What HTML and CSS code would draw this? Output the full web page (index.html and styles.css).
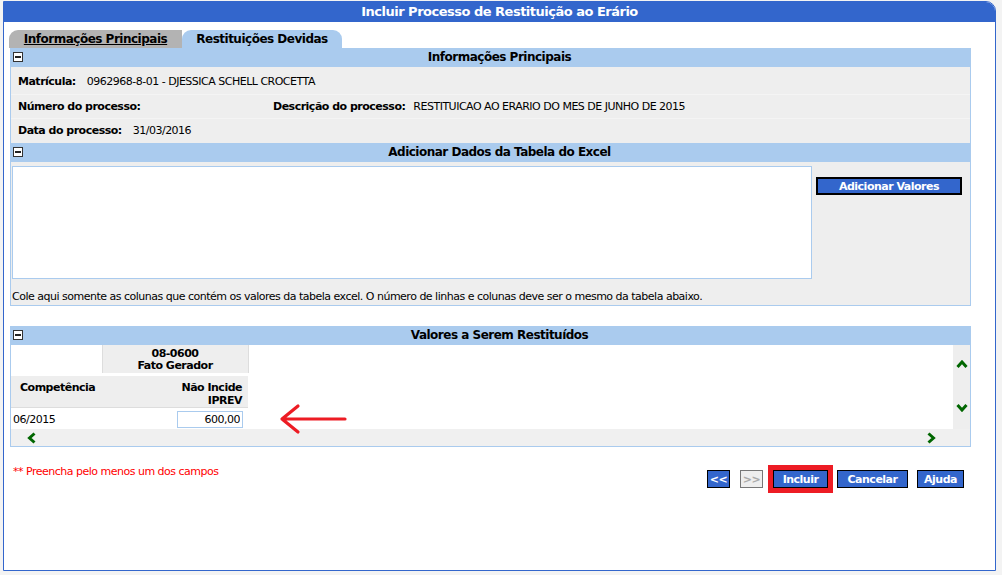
FILE: index.html
```html
<!DOCTYPE html>
<html>
<head>
  <meta charset="utf-8" />
	<title>Incluir Processo de Restituição ao Erário</title>
	<link rel="stylesheet" href="styles.css">
</head>
<body>

<div class='janela'>
	<div class='titulo'>Incluir Processo de Restituição ao Erário</div>

	<div class='conteudo'>

		<div class='abas'>
			<a class='aba inativa' href="#">Informações Principais</a>
			<span class='aba ativa'>Restituições Devidas</span>
		</div>

		<div class='painel'>
			<div class='cab'>
				<span class='menos'></span>
				Informações Principais
			</div>
			<div class='campos'>
				<div class='linha'>
					<span class='rot'>Matrícula:</span>
					<span class='val'>0962968-8-01 - DJESSICA SCHELL CROCETTA</span>
				</div>
				<div class='linha'>
					<span class='rot num'>Número do processo:</span>
					<span class='rot desc'>Descrição do processo:</span>
					<span class='val'>RESTITUICAO AO ERARIO DO MES DE JUNHO DE 2015</span>
				</div>
				<div class='linha'>
					<span class='rot'>Data do processo:</span>
					<span class='val'>31/03/2016</span>
				</div>
			</div>

			<div class='cab'>
				<span class='menos'></span>
				Adicionar Dados da Tabela do Excel
			</div>
			<div class='excel'>
				<textarea class='colar'></textarea>
				<button class='btn btn-add' type="button">Adicionar Valores</button>
			</div>
			<div class='dica'>Cole aqui somente as colunas que contém os valores da tabela excel. O número de linhas e colunas deve ser o mesmo da tabela abaixo.</div>
		</div>

		<div class='painel painel-valores'>
			<div class='cab'>
				<span class='menos'></span>
				Valores a Serem Restituídos
			</div>
			<div class='grade'>
				<div class='area'>
					<table class='valores'>
						<tr class='l-fato'>
							<td class='vazio'></td>
							<th class='fato'>08-0600<br>Fato Gerador</th>
						</tr>
						<tr class='l-cab'>
							<th class='comp'>Competência</th>
							<th class='incide'>Não Incide<br>IPREV</th>
						</tr>
						<tr class='l-dado'>
							<td>06/2015</td>
							<td class='campo'><input type="text" value="600,00"></td>
						</tr>
					</table>
					<!-- seta de destaque -->
					<svg class='seta' width="70" height="34" viewBox="0 0 70 34">
						<path d="M4 16 L67 16 M20 3 L4 16 L20 29" fill="none" stroke="#ed1c24" stroke-width="3.2" stroke-linecap="round" stroke-linejoin="round"/>
					</svg>
				</div>
				<div class='rolagem-v'>
					<svg width="12" height="8" viewBox="0 0 12 8"><path d="M1.5 7 L6 2 L10.5 7" fill="none" stroke="#006600" stroke-width="3"/></svg>
					<svg width="12" height="8" viewBox="0 0 12 8"><path d="M1.5 1 L6 6 L10.5 1" fill="none" stroke="#006600" stroke-width="3"/></svg>
				</div>
			</div>
			<div class='rolagem-h'>
				<svg width="9" height="12" viewBox="0 0 9 12"><path d="M7.5 1.5 L2.5 6 L7.5 10.5" fill="none" stroke="#006600" stroke-width="3"/></svg>
				<svg width="9" height="12" viewBox="0 0 9 12"><path d="M1.5 1.5 L6.5 6 L1.5 10.5" fill="none" stroke="#006600" stroke-width="3"/></svg>
			</div>
		</div>

		<div class='rodape'>
			<span class='aviso'>** Preencha pelo menos um dos campos</span>
			<div class='botoes'>
				<button class='btn b-volta' type="button">&lt;&lt;</button>
				<button class='btn b-avanca desab' type="button" disabled>&gt;&gt;</button>
				<button class='btn b-incluir destaque' type="button">Incluir</button>
				<button class='btn b-cancelar' type="button">Cancelar</button>
				<button class='btn b-ajuda' type="button">Ajuda</button>
			</div>
		</div>

	</div>
</div>

</body>
</html>
```

FILE: styles.css
```css
	*{margin:0;padding:0;box-sizing:border-box;}
	body{
		background:#f3f3f3;
		font-family:"DejaVu Sans", Verdana, sans-serif;
		font-size:11px;
		letter-spacing:-0.5px;
		color:#000;
	}
	.janela{
		margin:1px 0 0 3px;
		width:993px;
		height:570px;
		border:1px solid #3366cc;
		border-top-right-radius:10px;
		background:#fff;
	}
	.titulo{
		height:20px;
		line-height:20px;
		background:#3366cc;
		border-top-right-radius:9px;
		color:#fff;
		font-weight:bold;
		font-size:13px;
		text-align:center;
	}
	.conteudo{
		padding:8px 0 0 5px;
		width:967px;
	}

	/* abas */
	.abas{
		display:flex;
		height:18px;
	}
	.aba{
		display:block;
		height:18px;
		line-height:19px;
		font-size:12px;
		font-weight:bold;
		color:#000;
		text-align:center;
	}
	.inativa{
		width:173px;
		background:#b3b3b3;
		border-top-left-radius:9px;
		text-decoration:underline;
	}
	.ativa{
		width:160px;
		background:#aacbee;
		border-top-left-radius:9px;
		border-top-right-radius:9px;
	}

	/* paineis */
	.painel{
		margin-left:1px;
		width:961px;
		border:1px solid #aacbee;
		border-top:none;
		background:#eee;
	}
	.cab{
		position:relative;
		height:19px;
		line-height:19px;
		padding-left:18px;
		background:#aacbee;
		font-size:12px;
		font-weight:bold;
		text-align:center;
	}
	.menos{
		position:absolute;
		left:2px;
		top:4px;
		width:10px;
		height:10px;
		border:1px solid #333;
		background:#fff;
	}
	.menos:after{
		content:'';
		position:absolute;
		left:1px;
		top:3px;
		width:6px;
		height:2px;
		background:#222;
	}
	.campos{
		padding:3px 0 1px;
	}
	.linha{
		display:flex;
		height:24px;
		line-height:24px;
		padding-left:7px;
		border-top:1px solid #f4f4f4;
	}
	.linha:first-child{border-top:none;}
	.rot{
		font-weight:bold;
		margin-right:11px;
	}
	.num{
		width:244px;
	}
	.desc{
		margin-right:8px;
	}
	.excel{
		display:flex;
		padding:4px 0 0 1px;
		height:117px;
	}
	.colar{
		width:800px;
		height:113px;
		border:1px solid #aacbee;
		background:#fff;
		resize:none;
		outline:none;
	}
	.btn{
		height:18px;
		padding:0;
		background:#3366cc;
		border:1px solid #000;
		color:#fff;
		font-family:"DejaVu Sans", Verdana, sans-serif;
		font-size:11px;
		letter-spacing:inherit;
		font-weight:bold;
		cursor:pointer;
	}
	.btn-add{
		margin:11px 0 0 4px;
		width:146px;
		border:2px solid #000;
	}
	.dica{
		padding:11px 0 0 1px;
		height:26px;
		line-height:13px;
	}

	/* valores */
	.painel-valores{
		margin-top:20px;
	}
	.grade{
		display:flex;
		height:84px;
	}
	.area{
		position:relative;
		width:942px;
		background:#fff;
	}
	.valores{
		border-collapse:collapse;
		table-layout:fixed;
	}
	.valores th{
		font-weight:bold;
		line-height:13px;
	}
	.vazio{width:91px;}
	.fato{
		width:146px;
		height:29px;
		padding-top:3px;
		line-height:12px !important;
		background:#eee;
		border:1px solid #ddd;
		border-top:none;
		text-align:center;
	}
	.l-cab th{
		height:33px;
		background:#eee;
		border-top:3px solid #fff;
		border-bottom:1px solid #ddd;
		vertical-align:top;
		padding-top:5px;
	}
	.comp{
		text-align:left;
		padding-left:9px;
	}
	.incide{
		text-align:right;
		padding-right:6px;
	}
	.l-dado td{
		height:23px;
		padding-left:2px;
		padding-top:1px;
	}
	.campo{text-align:right;padding-right:5px;}
	.campo input{
		width:66px;
		height:17px;
		border:1px solid #aacbee;
		text-align:right;
		padding-right:2px;
		font-family:"DejaVu Sans", Verdana, sans-serif;
		font-size:11px;
		letter-spacing:inherit;
		outline:none;
		vertical-align:middle;
	}
	.seta{
		position:absolute;
		left:267px;
		top:58px;
	}
	.rolagem-v{
		display:flex;
		flex-direction:column;
		justify-content:space-between;
		align-items:center;
		width:17px;
		padding:15px 0 17px;
	}
	.rolagem-h{
		display:flex;
		justify-content:space-between;
		height:17px;
		padding:3px 34px 0 16px;
		background:#f0f0f0;
	}

	/* rodape */
	.rodape{
		display:flex;
		justify-content:space-between;
		margin-top:18px;
		width:962px;
	}
	.aviso{
		padding-left:4px;
		color:#ff0000;
		line-height:13px;
	}
	.botoes{
		display:flex;
		gap:9px;
		margin-top:5px;
		padding-right:7px;
	}
	.b-volta,.b-avanca{width:23px;margin-right:1px;}
	.b-incluir{width:55px;}
	.b-cancelar{width:71px;}
	.b-ajuda{width:47px;}
	.desab{
		background:#eee;
		border-color:#777;
		color:#aaa;
		cursor:default;
	}
	.destaque{
		outline:5px solid #ed1c24;
	}
```
